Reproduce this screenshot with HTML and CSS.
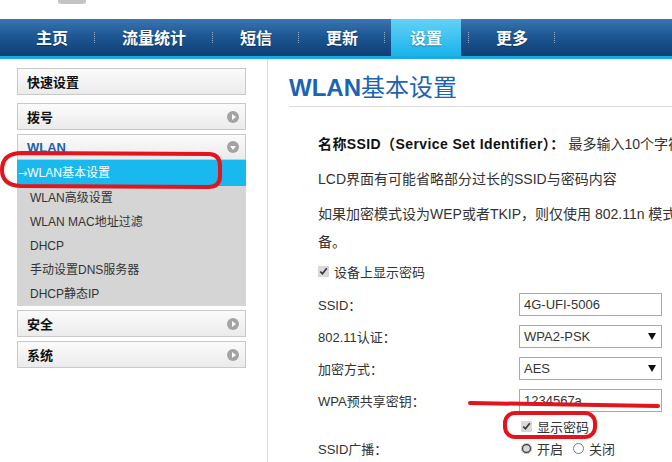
FILE: index.html
```html
<!DOCTYPE html>
<html lang="zh-CN">
<head>
<meta charset="utf-8">
<title>WLAN基本设置</title>
<link rel="stylesheet" href="styles.css">
</head>
<body>
<div class="page">
  <header class="top"><div class="logo-frag"></div></header>
  <nav class="nav">
    <a class="nav-item">主页</a><span class="sep"></span>
    <a class="nav-item">流量统计</a><span class="sep"></span>
    <a class="nav-item">短信</a><span class="sep"></span>
    <a class="nav-item">更新</a><span class="sep"></span>
    <a class="nav-item active">设置</a><span class="sep"></span>
    <a class="nav-item">更多</a><span class="sep"></span>
  </nav>
  <div class="main">
    <aside class="side">
      <div class="menu-box"><span>快速设置</span></div>
      <div class="menu-box g8"><span>拨号</span><i class="ic right"></i></div>
      <div class="menu-box g4 open"><span>WLAN</span><i class="ic down"></i></div>
      <ul class="sub">
        <li class="cur"><span class="arr">→</span>WLAN基本设置</li>
        <li>WLAN高级设置</li>
        <li>WLAN MAC地址过滤</li>
        <li>DHCP</li>
        <li>手动设置DNS服务器</li>
        <li>DHCP静态IP</li>
      </ul>
      <div class="menu-box g4"><span>安全</span><i class="ic right"></i></div>
      <div class="menu-box g4"><span>系统</span><i class="ic right"></i></div>
    </aside>
    <section class="content">
      <h1 class="title"><b>WLAN</b>基本设置</h1>
      <div class="body">
        <p class="p1"><b>名称SSID（Service Set Identifier）：</b> 最多输入10个字符，可包含字母、数字和符号</p>
        <p class="p2">LCD界面有可能省略部分过长的SSID与密码内容</p>
        <p class="p3">如果加密模式设为WEP或者TKIP，则仅使用 802.11n 模式的终端将无法连接到此设<br>备。</p>
        <label class="chk-row"><input type="checkbox" checked> 设备上显示密码</label>
        <div class="row"><span class="lbl">SSID：</span><input class="field" type="text" value="4G-UFI-5006"></div>
        <div class="row"><span class="lbl">802.11认证：</span><span class="sel"><select class="field"><option>WPA2-PSK</option></select></span></div>
        <div class="row"><span class="lbl">加密方式：</span><span class="sel"><select class="field"><option>AES</option></select></span></div>
        <div class="row"><span class="lbl">WPA预共享密钥：</span><input class="field" type="text" value="1234567a"></div>
        <div class="row small"><span class="lbl"></span><label class="inline"><input type="checkbox" checked> 显示密码</label></div>
        <div class="row small r2"><span class="lbl">SSID广播：</span><label class="inline"><input type="radio" name="b" checked> 开启</label><label class="inline gap"><input type="radio" name="b"> 关闭</label></div>
      </div>
    </section>
  </div>
  <svg class="marks" width="672" height="462" viewBox="0 0 672 462">
    <path d="M22 153 L210 154 Q220 155 220 166 L220 176 Q220 187 208 187 L20 186 Q2 185 2 170 Q2 153 22 153 Z" fill="none" stroke="#e3141c" stroke-width="4"/>
    <line x1="470" y1="403" x2="658" y2="406" stroke="#e3141c" stroke-width="4" stroke-linecap="round"/>
    <rect x="505" y="413" width="90" height="24" rx="10" ry="10" fill="none" stroke="#e3141c" stroke-width="4"/>
  </svg>
</div>
</body>
</html>
```

FILE: styles.css
```css
html, body {
  margin: 0;
  padding: 0;
  overflow: hidden;
  background: #fff;
}
body {
  font-family: "Liberation Sans", "Noto Sans CJK SC", sans-serif;
  color: #333;
}
.page {
  position: relative;
  width: 672px;
  height: 462px;
  overflow: hidden;
}
.top {
  height: 19px;
}
.logo-frag {
  margin-left: 58px;
  width: 28px;
  height: 4px;
  background: #c4c4c4;
  border-radius: 0 0 3px 3px;
}
.nav {
  display: flex;
  align-items: stretch;
  height: 37px;
  padding-left: 10px;
  background: linear-gradient(#3a76b2, #1d5794 45%, #0f3f75);
  border-bottom: 3px solid #19ace3;
}
.nav-item {
  padding: 0 26px;
  line-height: 37px;
  font-family: "Noto Sans CJK SC", sans-serif;
  font-size: 16px;
  font-weight: 700;
  color: #fff;
  text-shadow: 0 1px 1px rgba(0,0,0,0.35);
}
.nav-item.active {
  margin: 0 7px 0 5px;
  padding: 0 19px;
  background: linear-gradient(#62d1f7, #1ab3ea);
}
.sep {
  width: 1px;
  align-self: center;
  height: 11px;
  border-left: 1px dotted #8fb0d0;
}
.main {
  display: flex;
  align-items: stretch;
  height: 403px;
}
.side {
  width: 267px;
  box-sizing: border-box;
  padding: 9px 21px 0 17px;
  flex: none;
}
.menu-box {
  display: flex;
  align-items: center;
  justify-content: space-between;
  height: 27px;
  box-sizing: border-box;
  padding: 0 6px 0 9px;
  border: 1px solid #c9c9c9;
  background: linear-gradient(#fbfbfb, #ebebeb);
  font-family: "Noto Sans CJK SC", sans-serif;
  font-size: 13px;
  font-weight: 700;
  color: #111;
}
.menu-box.g8 { margin-top: 8px; }
.menu-box.g4 { margin-top: 4px; }
.menu-box.open {
  height: 26px;
  color: #1f5fa8;
  font-family: "Liberation Sans", sans-serif;
}
.ic {
  position: relative;
  width: 12px;
  height: 12px;
  border-radius: 50%;
  background: #a3a3a3;
}
.ic::after {
  content: "";
  position: absolute;
  width: 0;
  height: 0;
}
.ic.right::after {
  left: 5px;
  top: 3px;
  border-top: 3px solid transparent;
  border-bottom: 3px solid transparent;
  border-left: 4px solid #fff;
}
.ic.down::after {
  left: 3px;
  top: 5px;
  border-left: 3px solid transparent;
  border-right: 3px solid transparent;
  border-top: 4px solid #fff;
}
.sub {
  list-style: none;
  margin: 0;
  padding: 0;
  background: #d5d5d5;
  font-size: 12px;
  color: #333;
}
.sub li {
  height: 24px;
  line-height: 24px;
  padding-left: 13px;
}
.sub li.cur {
  height: 26px;
  line-height: 26px;
  padding-left: 1px;
  background: #19b8ef;
  color: #fff;
}
.arr {
  font-family: "DejaVu Sans", sans-serif;
  font-size: 11px;
}
.content {
  flex: 1;
  min-width: 0;
  border-left: 1px solid #dcdcdc;
  padding-left: 21px;
  overflow: hidden;
}
.title {
  margin: 14px 0 0;
  padding-bottom: 3px;
  line-height: 30px;
  font-size: 24px;
  font-weight: 400;
  color: #1c63b3;
  border-bottom: 1px solid #dcdcdc;
  white-space: nowrap;
}
.title b {
  font-weight: 700;
  font-family: "Liberation Sans", sans-serif;
}
.body {
  padding-left: 29px;
  font-size: 14px;
}
.body p {
  margin: 0 0 7px;
  line-height: 28px;
  white-space: nowrap;
}
.body .p1 { margin-top: 23px; }
.body .p1 b { color: #111; letter-spacing: 0.4px; }
.chk-row {
  display: flex;
  align-items: center;
  height: 22px;
  margin: -3px 0 6px;
  font-size: 13px;
}
input[type="checkbox"], input[type="radio"] {
  width: 11px;
  height: 11px;
  margin: 0 5px 0 0;
  accent-color: #d9d9d9;
}
.row {
  display: flex;
  align-items: center;
  height: 32px;
  font-size: 13px;
}
.row.small { height: 20px; }
.row.r2 { margin-top: 2px; }
.lbl {
  width: 201px;
  flex: none;
}
.field {
  width: 143px;
  height: 23px;
  box-sizing: border-box;
  border: 1px solid #a9a9a9;
  padding: 0 4px;
  font-family: "Liberation Sans", sans-serif;
  font-size: 13px;
  color: #333;
  background: #fff;
  border-radius: 0;
  outline: none;
}
select.field {
  appearance: none;
  -webkit-appearance: none;
  padding-left: 4px;
}
.sel {
  position: relative;
  display: inline-block;
  height: 23px;
}
.sel::after {
  content: "";
  position: absolute;
  right: 6px;
  top: 8px;
  border-left: 4px solid transparent;
  border-right: 4px solid transparent;
  border-top: 7px solid #111;
  pointer-events: none;
}
.inline {
  display: flex;
  align-items: center;
}
.inline input { margin-left: 2px; }
.inline.gap { margin-left: 8px; }
.marks {
  position: absolute;
  left: 0;
  top: 0;
  pointer-events: none;
}
```
